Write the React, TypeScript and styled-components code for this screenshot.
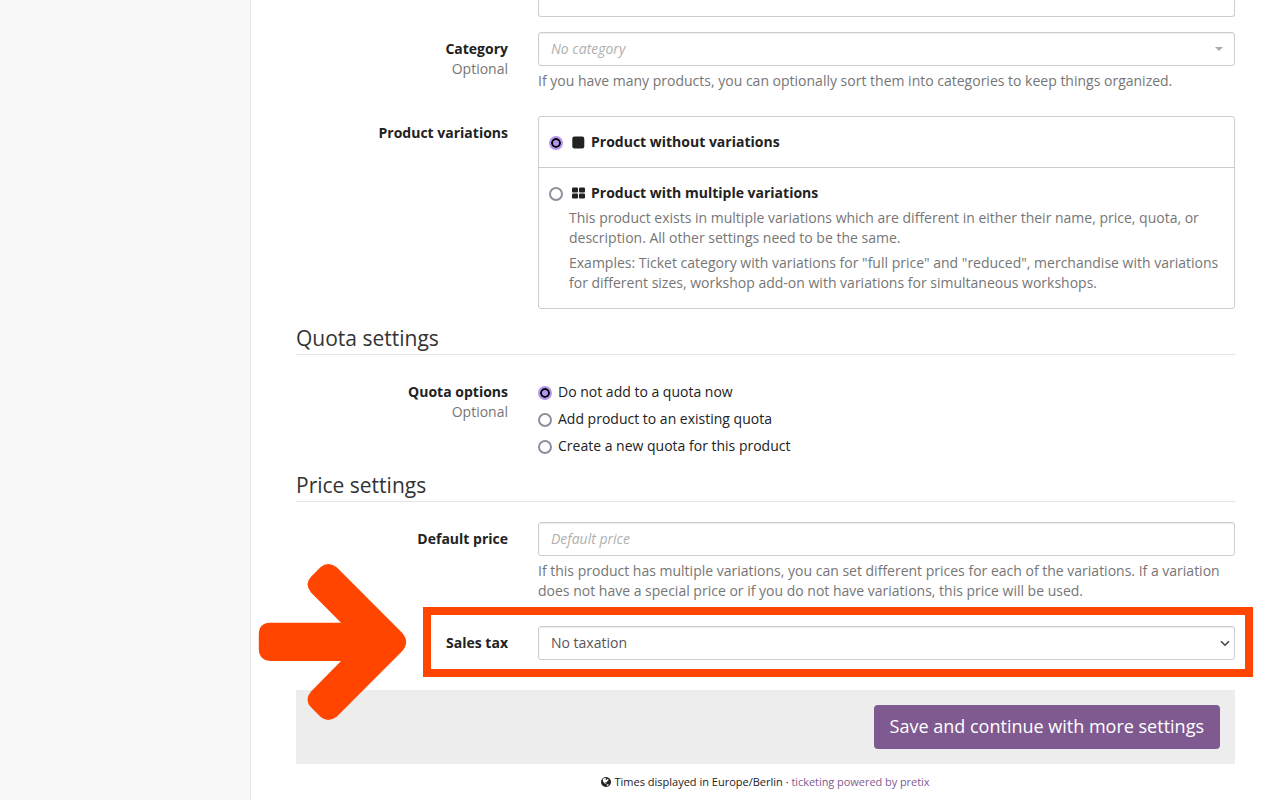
import React from "react";
import styled, { createGlobalStyle } from "styled-components";

const GlobalStyle = createGlobalStyle`
  * { box-sizing: border-box; }
  body {
    margin: 0;
    overflow: hidden;
    background: #fff;
    color: #222;
    font-family: "Open Sans", "Noto Sans", sans-serif;
    font-size: 14px;
    line-height: 20px;
  }
`;

const Page = styled.div`
  position: relative;
  display: flex;
  width: 1280px;
  height: 800px;
  overflow: hidden;
`;

const Sidebar = styled.aside`
  flex: 0 0 251px;
  background: #f8f8f8;
  border-right: 1px solid #e7e7e7;
`;

const Main = styled.main`
  flex: 1;
  padding: 0 45px;
`;

const FormGroup = styled.div<{ $gap: number }>`
  display: flex;
  gap: 30px;
  margin-bottom: ${(p) => p.$gap}px;
`;

const LabelColumn = styled.div`
  flex: 0 0 212px;
  padding-top: 7px;
  text-align: right;
`;

const Label = styled.label`
  display: block;
  font-weight: 700;
`;

const Optional = styled.span`
  display: block;
  color: #767676;
`;

const Field = styled.div`
  position: relative;
  flex: 1;
  min-width: 0;
`;

const TextInput = styled.input`
  display: block;
  width: 100%;
  height: 34px;
  padding: 5px 12px 7px;
  border: 1px solid #ccc;
  border-radius: 3px;
  background: #fff;
  box-shadow: inset 0 1px 1px rgba(0, 0, 0, 0.075);
  color: #555;
  font: inherit;
  &::placeholder {
    color: #b0b0b0;
    font-style: italic;
    opacity: 1;
  }
`;

const ClippedField = styled.div`
  height: 17px;
  border: 1px solid #ccc;
  border-top: 0;
  border-radius: 0 0 3px 3px;
`;

const SelectInput = styled(TextInput).attrs({ as: "select" })`
  appearance: none;
  padding: 6px 12px;
`;

const Caret = styled.span`
  position: absolute;
  top: 15px;
  right: 12px;
  border: 4px solid transparent;
  border-top-color: #aaa;
  border-bottom: 0;
`;

const Chevron = styled.svg`
  position: absolute;
  top: 14px;
  right: 5px;
  width: 10px;
  height: 7px;
  fill: none;
  stroke: #444;
  stroke-width: 1.6;
`;

const Help = styled.p`
  margin: 5px 0 0;
  color: #767676;
`;

const VariationBox = styled.div`
  border: 1px solid #ccc;
  border-radius: 3px;
`;

const VariationOption = styled.div<{ $last?: boolean }>`
  display: flex;
  gap: 6px;
  padding: 15px 10px;
  border-top: ${(p) => (p.$last ? "1px solid #ccc" : "0")};
`;

const VariationTitle = styled.div`
  display: flex;
  align-items: center;
  gap: 6px;
  margin-left: 3px;
  font-weight: 700;
`;

const VariationText = styled.p`
  margin: 5px 0 0;
  color: #767676;
`;

const Radio = styled.input.attrs({ type: "radio" })`
  appearance: none;
  flex: none;
  width: 14px;
  height: 14px;
  margin: 4px 0 0;
  border: 2px solid #8f8f9d;
  border-radius: 50%;
  background: #fff;
  &:checked {
    border-color: #b596ee;
    background: #b596ee;
    box-shadow: inset 0 0 0 2px #000;
  }
`;

const RadioList = styled.div`
  display: flex;
  flex-direction: column;
  gap: 7px;
  padding-top: 7px;
`;

const RadioLabel = styled.label`
  display: flex;
  gap: 6px;
`;

const SectionTitle = styled.h2`
  margin: 0 0 20px;
  padding-bottom: 2px;
  border-bottom: 1px solid #e5e5e5;
  color: #333;
  font-size: 21px;
  font-weight: 400;
  line-height: 28px;
`;

const SaveBar = styled.div`
  display: flex;
  justify-content: flex-end;
  padding: 15px;
  background: #ededed;
`;

const SaveButton = styled.button`
  height: 44px;
  padding: 0 16px 2px;
  border: 0;
  border-radius: 4px;
  background: #7f5a91;
  color: #fff;
  font: inherit;
  font-size: 18px;
  line-height: 24px;
`;

const Footer = styled.footer`
  display: flex;
  justify-content: center;
  align-items: center;
  gap: 3px;
  padding-top: 10px;
  font-size: 11px;
  line-height: 16px;
`;

const FooterLink = styled.a`
  color: #7f5a91;
  letter-spacing: -0.05px;
`;

const Highlight = styled.div`
  position: absolute;
  top: 607px;
  left: 423px;
  width: 830px;
  height: 70px;
  border: 8px solid #ff4500;
  pointer-events: none;
`;

const Arrow = styled.svg`
  position: absolute;
  top: 563px;
  left: 258px;
  width: 150px;
  height: 158px;
  fill: #ff4500;
  pointer-events: none;
`;

const Icon = styled.svg<{ $size: number }>`
  flex: none;
  width: ${(p) => p.$size}px;
  height: ${(p) => p.$size}px;
  fill: currentColor;
`;

const SquareIcon = () => (
  <Icon $size={13} viewBox="0 0 13 13">
    <rect x="0.3" y="0.5" width="12" height="12" rx="2.2" />
  </Icon>
);

const GridIcon = () => (
  <Icon $size={13} viewBox="0 0 13 13">
    <rect x="0" y="0.5" width="6" height="5" rx="1" />
    <rect x="7" y="0.5" width="6" height="5" rx="1" />
    <rect x="0" y="6.5" width="6" height="5" rx="1" />
    <rect x="7" y="6.5" width="6" height="5" rx="1" />
  </Icon>
);

const GlobeIcon = () => (
  <Icon $size={10} viewBox="128 128 1536 1536">
    <path d="M896 128q209 0 385.5 103t279.5 279.5 103 385.5-103 385.5-279.5 279.5-385.5 103-385.5-103-279.5-279.5-103-385.5 103-385.5 279.5-279.5 385.5-103zm274 521q-2 1-9.5 9.5t-13.5 9.5q2 0 4.5-5t5-11 3.5-7q6-7 22-15 14-6 52-12 34-8 51 11-2-2 9.5-13t14.5-12q3-2 15-4.5t15-7.5l2-22q-12 1-17.5-7t-6.5-21q0 2-6 8 0-7-4.5-8t-11.5 1-9 1q-10-3-15-7.5t-8-16.5-4-15q-2-5-9.5-11t-9.5-10q-1-2-2.5-5.5t-3-6.5-4-5.5-5.5-2.5-7 5-7.5 10-4.5 5q-3-2-6-1.5t-4.5 1-4.5 3-5 3.5q-3 2-8.5 3t-8.5 2q15-5-1-11-10-4-16-3 9-4 7.5-12t-8.5-14h5q-1-4-8.5-8.5t-17.5-8.5-13-6q-8-5-34-9.5t-33-.5q-5 6-4.5 10.5t4 14 3.5 12.5q1 6-5.5 13t-6.5 12q0 7 14 15.5t10 21.5q-3 8-16 16t-16 12q-5 8-1.5 18.5t10.5 16.5q2 2 1.5 4t-3.5 4.5-5.5 4-6.5 3.5l-3 2q-11 5-20.5-6t-13.5-26q-7-25-16-30-23-8-29 1-5-13-41-26-25-9-58-4 6-1 0-15-7-15-19-12 3-6 4-17.5t1-13.5q3-13 12-23 1-1 7-8.5t9.5-13.5.5-6q35 4 50-11 5-5 11.5-17t10.5-17q9-6 14-5.5t14.5 5.5 14.5 5q14 1 15.5-11t-7.5-20q12 1 3-17-4-7-8-9-12-4-27 5-8 4 2 8-1-1-9.5 10.5t-16.5 17.5-16-5q-1-1-5.5-13.5t-9.5-13.5q-8 0-16 15 3-8-11-15t-24-8q19-12-8-27-7-4-20.5-5t-19.5 4q-5 7-5.5 11.5t5 8 10.5 5.5 11.5 4 8.5 3q14 10 8 14-2 1-8.5 3.5t-11.5 4.5-6 4q-3 4 0 14t-2 14q-5-5-9-17.5t-7-16.5q7 9-25 6l-10-1q-4 0-16 2t-20.5 1-13.5-8q-4-8 0-20 1-4 4-2-4-3-11-9.5t-10-8.5q-46 15-94 41 6 1 12-1 5-2 13-6.5t10-5.5q34-14 42-7l5-5q14 16 20 25-7-4-30-1-20 6-22 12 7 12 5 18-4-3-11.5-10t-14.5-11-15-5q-16 0-22 1-146 80-235 222 7 7 12 8 4 1 5 9t2.5 11 11.5-3q9 8 3 19 1-1 44 27 19 17 21 21 3 11-10 18-1-2-9-9t-9-4q-3 5 .5 18.5t10.5 12.5q-7 0-9.5 16t-2.5 35.5-1 23.5l2 1q-3 12 5.5 34.5t21.5 19.5q-13 3 20 43 6 8 8 9 3 2 12 7.5t15 10 10 10.5q4 5 10 22.5t14 23.5q-2 6 9.5 20t10.5 23q-1 0-2.5 1t-2.5 1q3 7 15.5 14t15.5 13q1 3 2 10t3 11 8 2q2-20-24-62-15-25-17-29-3-5-5.5-15.5t-4.5-14.5q2 0 6 1.5t8.5 3.5 7.5 4 2 3q-3 7 2 17.5t12 18.5 17 19 12 13q6 6 14 19.5t0 13.5q9 0 20 10t17 20q5 8 8 26t5 24q2 7 8.5 13.5t12.5 9.5l16 8 13 7q5 2 18.5 10.5t21.5 11.5q10 4 16 4t14.5-2.5 13.5-3.5q15-2 29 15t21 21q36 19 55 11-2 1 .5 7.5t8 15.5 9 14.5 5.5 8.5q5 6 18 15t18 15q6-4 7-9-3 8 7 20t18 10q14-3 14-32-31 15-49-18 0-1-2.5-5.5t-4-8.5-2.5-8.5 0-7.5 5-3q9 0 10-3.5t-2-12.5-4-13q-1-8-11-20t-12-15q-5 9-16 8t-16-9q0 1-1.5 5.5t-1.5 6.5q-13 0-15-1 1-3 2.5-17.5t3.5-22.5q1-4 5.5-12t7.5-14.5 4-12.5-4.5-9.5-17.5-2.5q-19 1-26 20-1 3-3 10.5t-5 11.5-9 7q-7 3-24 2t-24-5q-13-8-22.5-29t-9.5-37q0-10 2.5-26.5t3-25-5.5-24.5q3-2 9-9.5t10-10.5q2-1 4.5-1.5t4.5 0 4-1.5 3-6q-1-1-4-3-3-3-4-3 7 3 28.5-1.5t27.5 1.5q15 11 22-2 0-1-2.5-9.5t-.5-13.5q5 27 29 9 3 3 15.5 5t17.5 5q3 2 7 5.5t5.5 4.5 5-.5 8.5-6.5q10 14 12 24 11 40 19 44 7 3 11 2t4.5-9.5 0-14-1.5-12.5l-1-8v-18l-1-8q-15-3-18.5-12t1.5-18.5 15-18.5q1-1 8-3.5t15.5-6.5 12.5-8q21-19 15-35 7 0 11-9-1 0-5-3t-7.5-5-4.5-2q9-5 2-16 5-3 7.5-11t7.5-10q9 12 21 2 7-8 1-16 5-7 20.5-10.5t18.5-9.5q7 2 8-2t1-12 3-12q4-5 15-9t13-5l17-11q3-4 0-4 18 2 31-11 10-11-6-20 3-6-3-9.5t-15-5.5q3-1 11.5-.5t10.5-1.5q15-10-7-16-17-5-43 12zm-163 877q206-36 351-189-3-3-12.5-4.5t-12.5-3.5q-18-7-24-8 1-7-2.5-13t-8-9-12.5-8-11-7q-2-2-7-6t-7-5.5-7.5-4.5-8.5-2-10 1l-3 1q-3 1-5.5 2.5t-5.5 3-4 3 0 2.5q-21-17-36-22-5-1-11-5.5t-10.5-7-10-1.5-11.5 7q-5 5-6 15t-2 13q-7-5 0-17.5t2-18.5q-3-6-10.5-4.5t-12 4.5-11.5 8.5-9 6.5-8.5 5.5-8.5 7.5q-3 4-6 12t-5 11q-2-4-11.5-6.5t-9.5-5.5q2 10 4 35t5 38q7 31-12 48-27 25-29 40-4 22 12 26 0 7-8 20.5t-7 21.5q0 6 2 16z" />
  </Icon>
);

const quotaOptions = [
  "Do not add to a quota now",
  "Add product to an existing quota",
  "Create a new quota for this product",
];

export default function App() {
  return (
    <>
      <GlobalStyle />
      <Page>
        <Sidebar />
        <Main>
          <FormGroup $gap={15}>
            <LabelColumn />
            <Field>
              <ClippedField />
            </Field>
          </FormGroup>

          <FormGroup $gap={25}>
            <LabelColumn>
              <Label>Category</Label>
              <Optional>Optional</Optional>
            </LabelColumn>
            <Field>
              <TextInput placeholder="No category" />
              <Caret />
              <Help>If you have many products, you can optionally sort them into categories to keep things organized.</Help>
            </Field>
          </FormGroup>

          <FormGroup $gap={15}>
            <LabelColumn>
              <Label>Product variations</Label>
            </LabelColumn>
            <Field>
              <VariationBox>
                <VariationOption>
                  <Radio name="variations" defaultChecked />
                  <VariationTitle>
                    <SquareIcon />
                    Product without variations
                  </VariationTitle>
                </VariationOption>
                <VariationOption $last>
                  <Radio name="variations" />
                  <div>
                    <VariationTitle>
                      <GridIcon />
                      Product with multiple variations
                    </VariationTitle>
                    <VariationText>
                      This product exists in multiple variations which are different in either their name, price, quota, or
                      description. All other settings need to be the same.
                    </VariationText>
                    <VariationText>
                      Examples: Ticket category with variations for "full price" and "reduced", merchandise with variations
                      for different sizes, workshop add-on with variations for simultaneous workshops.
                    </VariationText>
                  </div>
                </VariationOption>
              </VariationBox>
            </Field>
          </FormGroup>

          <SectionTitle>Quota settings</SectionTitle>
          <FormGroup $gap={15}>
            <LabelColumn>
              <Label>Quota options</Label>
              <Optional>Optional</Optional>
            </LabelColumn>
            <Field>
              <RadioList>
                {quotaOptions.map((option, i) => (
                  <RadioLabel key={option}>
                    <Radio name="quota" defaultChecked={i === 0} />
                    {option}
                  </RadioLabel>
                ))}
              </RadioList>
            </Field>
          </FormGroup>

          <SectionTitle>Price settings</SectionTitle>
          <FormGroup $gap={25}>
            <LabelColumn>
              <Label>Default price</Label>
            </LabelColumn>
            <Field>
              <TextInput placeholder="Default price" />
              <Help>
                If this product has multiple variations, you can set different prices for each of the variations. If a
                variation does not have a special price or if you do not have variations, this price will be used.
              </Help>
            </Field>
          </FormGroup>

          <FormGroup $gap={30}>
            <LabelColumn>
              <Label>Sales tax</Label>
            </LabelColumn>
            <Field>
              <SelectInput>
                <option>No taxation</option>
              </SelectInput>
              <Chevron viewBox="0 0 10 7">
                <path d="M1 1.2 5 5.2 9 1.2" />
              </Chevron>
            </Field>
          </FormGroup>

          <SaveBar>
            <SaveButton>Save and continue with more settings</SaveButton>
          </SaveBar>
          <Footer>
            <GlobeIcon />
            <span>
              Times displayed in Europe/Berlin · <FooterLink>ticketing powered by pretix</FooterLink>
            </span>
          </Footer>
        </Main>

        <Highlight />
        <Arrow viewBox="0 0 150 158">
          <path d="M12 59.7H83L53 29.5Q46 21 53 13.7L62.7 4Q70 -2 78.7 4.3L144.3 70Q152 79 144.3 88L78.7 153.7Q70 160 62.7 154L53 144.3Q46 137 53 128.5L83 98H12Q1 97 .8 86V71Q1 60 12 59.7Z" />
        </Arrow>
      </Page>
    </>
  );
}
